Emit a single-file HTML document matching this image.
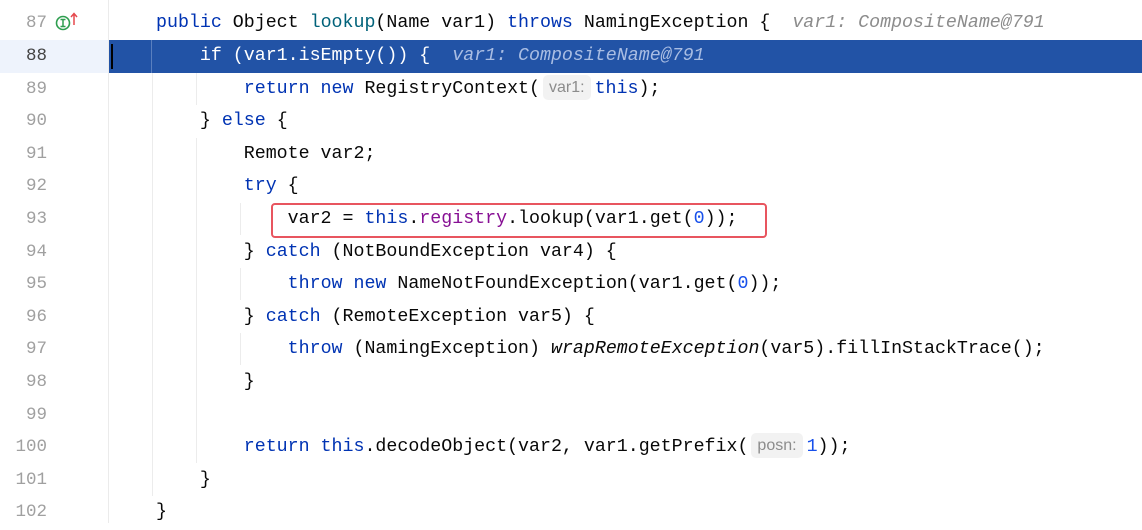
<!DOCTYPE html>
<html><head><meta charset="utf-8"><style>
*{margin:0;padding:0;box-sizing:border-box}
body{width:1142px;height:523px;background:#fff;position:relative;overflow:hidden;font-family:"Liberation Mono",monospace;font-size:18.3px;color:#080808}
.ln{position:absolute;left:0;width:47px;text-align:right;color:#a0a0a0;height:32.6px;line-height:33.6px;font-size:17.5px}
.c{position:absolute;left:156px;white-space:pre;height:32.6px;line-height:33.6px}
.k{color:#0033b3}.m{color:#00627a}.f{color:#871094}.n{color:#1750eb}.i{font-style:italic}
.h{color:#8c8c8c;font-style:italic}
.pill{display:inline-block;font-family:"Liberation Sans",sans-serif;font-size:16px;color:#8c8c8c;background:#f2f2f2;border-radius:5px;padding:0 6px;line-height:25px;margin:0 4px 0 3px;vertical-align:1px}
.g{position:absolute;width:1px;background:#ececec}
</style></head><body>
<div style="position:absolute;left:0;top:40px;width:109px;height:32.6px;background:#eef3fc"></div>
<div style="position:absolute;left:109px;top:40px;width:1033px;height:32.6px;background:#2253a6"></div>
<div style="position:absolute;left:108px;top:0;width:1px;height:523px;background:#ebebeb"></div>
<div style="position:absolute;left:111px;top:44px;width:2px;height:25px;background:#000"></div>
<div style="position:absolute;left:151px;top:40px;width:1px;height:32.6px;background:#5a7fbf"></div>
<div class="g" style="left:152px;top:73px;height:423px"></div>
<div class="g" style="left:196px;top:73px;height:32px"></div>
<div class="g" style="left:196px;top:138px;height:325px"></div>
<div class="g" style="left:240px;top:203px;height:32px"></div>
<div class="g" style="left:240px;top:268px;height:32px"></div>
<div class="g" style="left:240px;top:333px;height:32px"></div>
<svg style="position:absolute;left:55px;top:12px" width="26" height="22" viewBox="0 0 26 22">
<circle cx="8" cy="11" r="6.5" fill="none" stroke="#2e9e4f" stroke-width="1.6"/>
<path d="M5.5 7.5h5M8 7.5v7M5.5 14.5h5" stroke="#2e9e4f" stroke-width="1.5" fill="none"/>
<path d="M19 13V2M16 5l3-3.5 3 3.5" stroke="#e5484d" stroke-width="1.5" fill="none"/>
</svg>
<div style="position:absolute;left:271px;top:203px;width:496px;height:35px;border:2px solid #e8555f;border-radius:4px"></div>

<div class="ln" style="top:7.4px">87</div>
<div class="ln" style="top:40px;color:#444">88</div>
<div class="ln" style="top:72.6px">89</div>
<div class="ln" style="top:105.2px">90</div>
<div class="ln" style="top:137.8px">91</div>
<div class="ln" style="top:170.4px">92</div>
<div class="ln" style="top:203px">93</div>
<div class="ln" style="top:235.6px">94</div>
<div class="ln" style="top:268.2px">95</div>
<div class="ln" style="top:300.8px">96</div>
<div class="ln" style="top:333.4px">97</div>
<div class="ln" style="top:366px">98</div>
<div class="ln" style="top:398.6px">99</div>
<div class="ln" style="top:431.2px">100</div>
<div class="ln" style="top:463.8px">101</div>
<div class="ln" style="top:496.4px">102</div>

<div class="c" style="top:7.4px"><span class="k">public</span> Object <span class="m">lookup</span>(Name var1) <span class="k">throws</span> NamingException {  <span class="h">var1: CompositeName@791</span></div>
<div class="c" style="top:40px;color:#fff">    if (var1.isEmpty()) {  <span class="i" style="color:#a9bde3">var1: CompositeName@791</span></div>
<div class="c" style="top:72.6px">        <span class="k">return new</span> RegistryContext(<span class="pill">var1:</span><span class="k">this</span>);</div>
<div class="c" style="top:105.2px">    } <span class="k">else</span> {</div>
<div class="c" style="top:137.8px">        Remote var2;</div>
<div class="c" style="top:170.4px">        <span class="k">try</span> {</div>
<div class="c" style="top:203px">            var2 = <span class="k">this</span>.<span class="f">registry</span>.lookup(var1.get(<span class="n">0</span>));</div>
<div class="c" style="top:235.6px">        } <span class="k">catch</span> (NotBoundException var4) {</div>
<div class="c" style="top:268.2px">            <span class="k">throw new</span> NameNotFoundException(var1.get(<span class="n">0</span>));</div>
<div class="c" style="top:300.8px">        } <span class="k">catch</span> (RemoteException var5) {</div>
<div class="c" style="top:333.4px">            <span class="k">throw</span> (NamingException) <span class="i">wrapRemoteException</span>(var5).fillInStackTrace();</div>
<div class="c" style="top:366px">        }</div>
<div class="c" style="top:431.2px">        <span class="k">return this</span>.decodeObject(var2, var1.getPrefix(<span class="pill">posn:</span><span class="n">1</span>));</div>
<div class="c" style="top:463.8px">    }</div>
<div class="c" style="top:496.4px">}</div>
</body></html>
